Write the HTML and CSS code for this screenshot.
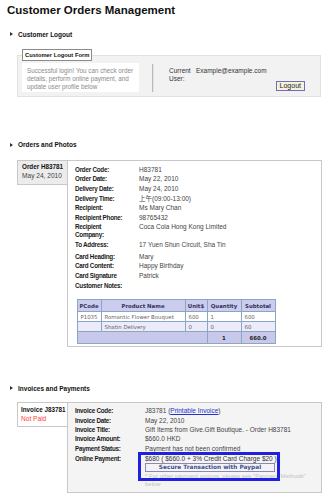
FILE: index.html
```html
<!DOCTYPE html>
<html lang="en">
<head>
    <meta charset="UTF-8">
    <title>Customer Orders Management</title>
    <link rel="stylesheet" href="styles.css">
</head>
<body>

<h1 class="page-title">Customer Orders Management</h1>

<div class="sec-head sec-first"><span class="arrow"></span>Customer Logout</div>
<fieldset class="logout-panel">
    <legend>Customer Logout Form</legend>
    <div class="logout-msg">Successful login! You can check order details, perform online payment, and update user profile below</div>
    <div class="divider"></div>
    <div class="user-info">
        <div class="user-label">Current User:</div>
        <div class="user-value">Example@example.com</div>
        <button class="logout-btn">Logout</button>
    </div>
</fieldset>

<div class="sec-head sec-orders"><span class="arrow"></span>Orders and Photos</div>
<div class="record">
    <div class="record-tab order-tab">
        <div class="tab-title">Order H83781</div>
        <div>May 24, 2010</div>
    </div>
    <div class="record-body">
        <div class="fields">
            <div class="lbl">Order Code:</div><div class="val">H83781</div>
            <div class="lbl">Order Date:</div><div class="val">May 22, 2010</div>
            <div class="lbl">Delivery Date:</div><div class="val">May 24, 2010</div>
            <div class="lbl">Delivery Time:</div><div class="val">上午(09:00-13:00)</div>
            <div class="lbl">Recipient:</div><div class="val">Ms Mary Chan</div>
            <div class="lbl">Recipient Phone:</div><div class="val">98765432</div>
            <div class="lbl lbl-wrap">Recipient Company:</div><div class="val">Coca Cola Hong Kong Limited</div>
            <div class="lbl">To Address:</div><div class="val">17 Yuen Shun Circuit, Sha Tin</div>
        </div>
        <div class="fields card-fields">
            <div class="lbl">Card Heading:</div><div class="val">Mary</div>
            <div class="lbl">Card Content:</div><div class="val">Happy Birthday</div>
            <div class="lbl">Card Signature</div><div class="val">Patrick</div>
            <div class="lbl">Customer Notes:</div><div class="val"></div>
        </div>
        <table class="items">
            <colgroup>
                <col class="c-code">
                <col class="c-name">
                <col class="c-unit">
                <col class="c-qty">
                <col class="c-sub">
            </colgroup>
            <thead>
                <tr>
                    <th>PCode</th>
                    <th>Product Name</th>
                    <th>Unit$</th>
                    <th>Quantity</th>
                    <th>Subtotal</th>
                </tr>
            </thead>
            <tbody>
                <tr>
                    <td>P1035</td>
                    <td>Romantic Flower Bouquet</td>
                    <td>600</td>
                    <td>1</td>
                    <td>600</td>
                </tr>
                <tr class="alt">
                    <td></td>
                    <td>Shatin Delivery</td>
                    <td>0</td>
                    <td>0</td>
                    <td>60</td>
                </tr>
                <tr class="total">
                    <td colspan="3"></td>
                    <td>1</td>
                    <td>660.0</td>
                </tr>
            </tbody>
        </table>
    </div>
</div>

<div class="sec-head sec-invoices"><span class="arrow"></span>Invoices and Payments</div>
<div class="record">
    <div class="record-tab invoice-tab">
        <div class="tab-title">Invoice J83781</div>
        <div class="not-paid">Not Paid</div>
    </div>
    <div class="record-body invoice-body">
        <div class="fields inv-fields">
            <div class="lbl">Invoice Code:</div><div class="val">J83781 (<a href="#">Printable Invoice</a>)</div>
            <div class="lbl">Invoice Date:</div><div class="val">May 22, 2010</div>
            <div class="lbl">Invoice Title:</div><div class="val">Gift Items from Give.Gift Boutique. - Order H83781</div>
            <div class="lbl">Invoice Amount:</div><div class="val">$660.0 HKD</div>
            <div class="lbl">Payment Status:</div><div class="val">Payment has not been confirmed</div>
            <div class="lbl lbl-pay">Online Payment:</div>
            <div class="val pay-cell">
                <div class="pay-total">$680 ( $660.0 + 3% Credit Card Charge $20 )</div>
                <button class="paypal-btn">Secure Transaction with Paypal</button>
                <div class="pay-note">* For other payment options, please see "Payment Methods" below</div>
                <div class="highlight"></div>
            </div>
        </div>
    </div>
</div>

</body>
</html>
```

FILE: styles.css
```css
body {
    margin: 0;
    padding: 0;
    background: #fff;
    color: #222;
    font-family: 'Liberation Sans', Arial, 'Noto Sans CJK SC', sans-serif;
    font-size: 6.5px;
}

.page-title {
    margin: 0;
    padding: 3px 7px 0;
    font-size: 11.5px;
    line-height: 14px;
    font-weight: bold;
    color: #111;
}

.sec-head {
    display: flex;
    align-items: center;
    height: 10px;
    padding-left: 10px;
    font-weight: bold;
    font-size: 6.5px;
    color: #111;
}

.arrow {
    width: 0;
    height: 0;
    border-left: 3px solid #333;
    border-top: 2px solid transparent;
    border-bottom: 2px solid transparent;
    margin-right: 5px;
}

.sec-first { margin-top: 12px; }
.sec-orders { margin-top: 43px; }
.sec-invoices { margin-top: 36px; }

/* logout form */
.logout-panel {
    display: flex;
    margin: 10px 9px 0 17px;
    padding: 2px 4px 4px;
    border: 1px solid #e2e2e2;
    background: #f2f2f2;
    min-width: 0;
}

.logout-panel legend {
    margin: 0;
    padding: 2px 2px;
    font-weight: bold;
    font-size: 5.8px;
    line-height: 6px;
    background: #fff;
    border: 1px solid #8a8a8a;
    color: #111;
}

.logout-msg {
    width: 110px;
    padding: 3.5px 2px 0.5px 5px;
    background: #fff;
    color: #8a8a8a;
    font-size: 6.3px;
    line-height: 8.3px;
}

.divider {
    width: 0;
    margin: 1px 0 0 13px;
    border-left: 1px solid #b8b8b8;
    border-right: 1px solid #e4e4e4;
}

.user-info {
    flex: 1;
    display: grid;
    grid-template-columns: 27px 1fr auto;
    align-items: start;
    padding: 4px 11px 0 15px;
    line-height: 8.3px;
    color: #333;
}

.logout-btn {
    align-self: end;
    margin: 0 0 1px;
    padding: 0 3px;
    height: 10px;
    font-family: 'Liberation Sans', Arial, sans-serif;
    font-size: 7px;
    line-height: 8px;
    color: #223;
    background: #f6f2dc;
    border: 1px solid #6f6fb4;
    border-radius: 0;
}

/* order / invoice records */
.record {
    display: flex;
    align-items: flex-start;
    margin: 10px 0 0 17px;
    width: 305px;
}

.sec-invoices + .record { margin-top: 9px; }

.record-tab {
    width: 45px;
    padding: 1px 0 4px 4px;
    border: 1px solid #c8c8c8;
    border-right: none;
    font-size: 6.6px;
    line-height: 9px;
    color: #444;
}

.order-tab { background: #ececec; }
.invoice-tab {
    background: #fff;
    padding: 2px 0 3px 3px;
    width: 46px;
}

.tab-title {
    font-weight: bold;
    font-size: 6.3px;
    color: #111;
}

.not-paid { color: #ff3b3b; }

.record-body {
    flex: 1;
    padding: 4px 7px 2px;
    border: 1px solid #c8c8c8;
    background: #fff;
}

.invoice-body {
    background: #f4f4f4;
    padding: 3px 7px 4px;
}

.fields {
    display: grid;
    grid-template-columns: 64px 1fr;
    line-height: 9.6px;
}

.card-fields { margin-top: 2.5px; }
.inv-fields {
    grid-template-columns: 70px 1fr;
    line-height: 9.4px;
}

.lbl {
    font-weight: bold;
    font-size: 6.3px;
    letter-spacing: -0.25px;
    color: #1a1a1a;
}

.lbl-wrap {
    width: 40px;
    line-height: 8.4px;
    padding-top: 0.5px;
}

.val { color: #444; }

.val a { color: #2233cc; }

/* products table */
.items {
    margin: 9px 0 0 1.5px;
    width: 198px;
    table-layout: fixed;
    border-collapse: collapse;
    border: 1px solid #6a8fb5;
    font-family: 'DejaVu Sans', Verdana, sans-serif;
    font-size: 5.4px;
    color: #666;
}

.c-code { width: 24px; }
.c-name { width: 84px; }
.c-unit { width: 22px; }
.c-qty { width: 34px; }
.c-sub { width: 34px; }

.items th,
.items td {
    border: 1px solid #8aa6c4;
    padding: 0 0 0 3px;
    height: 9px;
    text-align: left;
    white-space: nowrap;
    overflow: hidden;
}

.items th {
    height: 11px;
    padding: 0;
    background: #ccccef;
    color: #33335a;
    font-weight: bold;
    text-align: center;
}

.items .alt td { background: #ebebfa; }

.items .total td {
    height: 11px;
    padding: 0;
    background: #c8c8ea;
    font-weight: bold;
    color: #222;
    text-align: center;
}

/* online payment */
.lbl-pay { margin-top: 1px; }

.pay-cell {
    position: relative;
    margin-top: 1px;
}

.pay-total {
    color: #333;
    line-height: 9px;
}

.paypal-btn {
    display: block;
    width: 130px;
    height: 9px;
    margin: 0;
    padding: 0;
    border: 1px solid #8a8ab0;
    background: #f4f4f8;
    font-family: 'DejaVu Sans', Verdana, sans-serif;
    font-size: 5.8px;
    line-height: 7px;
    font-weight: bold;
    color: #3e4f8c;
}

.pay-note {
    max-width: 168px;
    margin-top: 1px;
    color: #c2c2c2;
    font-size: 6px;
    line-height: 7.5px;
}

.highlight {
    position: absolute;
    left: -7px;
    top: -2px;
    width: 136px;
    height: 23px;
    border: 3px solid #2020e0;
}
```
